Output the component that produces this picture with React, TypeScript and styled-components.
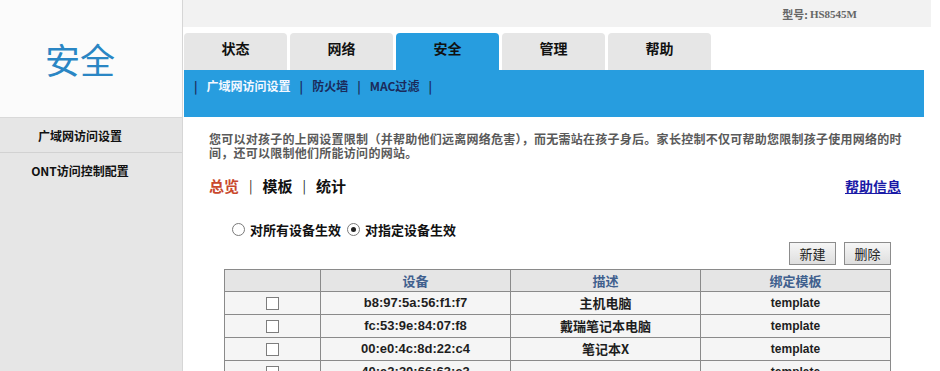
import React from "react";
import styled, { createGlobalStyle } from "styled-components";

const Global = createGlobalStyle`
  html, body { margin: 0; padding: 0; background: #fff; }
  body {
    font-family: "Liberation Sans", "Noto Sans CJK SC", sans-serif;
    height: 371px;
    overflow: hidden;
  }
`;

const CJK = `"Noto Sans CJK SC", "Liberation Sans", sans-serif`;

const Page = styled.div`
  display: flex;
  width: 940px;
  height: 371px;
  overflow: hidden;
`;

const Sidebar = styled.div`
  width: 182px;
  flex: none;
  background: #e6e6e6;
  border-right: 1px solid #d6d6d6;
  display: flex;
  flex-direction: column;
  & > * { flex-shrink: 0; }
`;

const Brand = styled.div`
  height: 117px;
  background: #fbfbfb;
  border-bottom: 1px solid #d9d9d9;
  display: flex;
  align-items: center;
  justify-content: center;
  padding-right: 22px;
  font-family: ${CJK};
  font-size: 35px;
  color: #2a86c4;
`;

const MenuItem = styled.div<{ $line?: boolean }>`
  height: 34px;
  display: flex;
  align-items: center;
  justify-content: center;
  padding-right: 22px;
  font-family: ${CJK};
  font-size: 12px;
  font-weight: bold;
  color: #111;
  border-bottom: ${(p) => (p.$line ? "1px solid #d2d2d2" : "none")};
`;

const Main = styled.div`
  width: 748px;
  display: flex;
  flex-direction: column;
  & > * { flex-shrink: 0; }
`;

const TopBar = styled.div`
  height: 27px;
  background: #f2f2f2;
  display: flex;
  align-items: center;
  justify-content: flex-end;
  padding-right: 74px;
  font-family: ${CJK};
  font-size: 11px;
  font-weight: bold;
  color: #666;
`;

const Model = styled.span`
  font-family: "Liberation Serif", serif;
  font-size: 11px;
  font-weight: bold;
  margin-left: 2px;
`;

const Tabs = styled.div`
  margin-top: 6px;
  display: flex;
  gap: 3px;
  padding-left: 1px;
  height: 37px;
`;

const Tab = styled.div<{ $active?: boolean }>`
  width: 103px;
  height: 37px;
  border-radius: 4px 4px 0 0;
  background: ${(p) => (p.$active ? "#279ddf" : "#e6e6e6")};
  display: flex;
  justify-content: center;
  padding-top: 6px;
  box-sizing: border-box;
  font-family: ${CJK};
  font-size: 14px;
  font-weight: bold;
  color: #111;
  line-height: 18px;
`;

const BlueBar = styled.div`
  margin-left: 1px;
  width: 740px;
  height: 47px;
  background: #279ddf;
  display: flex;
  align-items: flex-start;
  padding: 8px 0 0 10px;
  box-sizing: border-box;
  gap: 9px;
  font-family: ${CJK};
  font-size: 12px;
  font-weight: bold;
  line-height: 16px;
  color: #1b2b5c;
`;

const SubItem = styled.span<{ $active?: boolean }>`
  color: ${(p) => (p.$active ? "#f4f8ff" : "#1b2b5c")};
`;

const Sep = styled.span`
  color: #1b2b5c;
`;

const Content = styled.div`
  padding: 15px 0 0 26px;
  display: flex;
  flex-direction: column;
  & > * { flex-shrink: 0; }
`;

const Intro = styled.p`
  margin: 0;
  font-family: ${CJK};
  font-size: 12px;
  letter-spacing: 0.26px;
  line-height: 14px;
  font-weight: bold;
  color: #5a5a5a;
  white-space: nowrap;
`;

const NavRow = styled.div`
  margin-top: 17px;
  width: 692px;
  display: flex;
  align-items: center;
  font-family: ${CJK};
  font-size: 15px;
  font-weight: bold;
  line-height: 18px;
`;

const NavLink = styled.span<{ $active?: boolean }>`
  color: ${(p) => (p.$active ? "#c9482c" : "#111")};
`;

const NavSep = styled.span`
  color: #222;
  margin: 0 10px;
  font-size: 13px;
  font-weight: normal;
`;

const HelpLink = styled.a`
  margin-left: auto;
  color: #1a1aa6;
  text-decoration: underline;
  font-size: 14px;
`;

const RadioRow = styled.div`
  margin: 26px 0 0 20px;
  display: flex;
  align-items: center;
  font-family: ${CJK};
  font-size: 13px;
  font-weight: bold;
  color: #111;
  height: 16px;
`;

const Radio = styled.span<{ $checked?: boolean }>`
  width: 11px;
  height: 11px;
  border-radius: 50%;
  border: 1px solid #7a7a7a;
  background: #fff;
  display: inline-flex;
  align-items: center;
  justify-content: center;
  margin-right: 5px;
  margin-left: 3px;
  &::after {
    content: "";
    width: 5px;
    height: 5px;
    border-radius: 50%;
    background: ${(p) => (p.$checked ? "#222" : "transparent")};
  }
`;

const RadioLabel = styled.span`
  margin-right: 3px;
`;

const ButtonRow = styled.div`
  margin-top: 5px;
  width: 682px;
  display: flex;
  justify-content: flex-end;
  gap: 8px;
`;

const Button = styled.button`
  width: 47px;
  height: 23px;
  padding: 0;
  border: 1px solid #8c8c8c;
  background: linear-gradient(#f6f6f6, #dedede);
  font-family: ${CJK};
  font-size: 13px;
  color: #222;
  line-height: 20px;
`;

const Table = styled.table`
  margin: 4px 0 0 15px;
  border-collapse: collapse;
  width: 667px;
  table-layout: fixed;
`;

const Th = styled.th<{ $w: number }>`
  width: ${(p) => p.$w}px;
  height: 21px;
  padding: 0;
  background: #e5e5e5;
  border: 1px solid #8a8a8a;
  font-family: ${CJK};
  font-size: 13px;
  font-weight: bold;
  color: #40608e;
  line-height: 16px;
`;

const Td = styled.td<{ $kind?: "cjk" | "mac" | "plain" }>`
  height: 22px;
  padding: 0;
  background: #f5f5f5;
  border: 1px solid #8a8a8a;
  text-align: center;
  font-family: ${(p) => (p.$kind === "cjk" ? CJK : `"Liberation Sans", sans-serif`)};
  font-size: ${(p) => (p.$kind === "plain" ? "12px" : "13px")};
  font-weight: bold;
  color: #1e1e1e;
  line-height: 16px;
`;

const Check = styled.span`
  display: inline-block;
  width: 11px;
  height: 11px;
  border: 1px solid #7d7d7d;
  background: #fff;
  vertical-align: middle;
`;

const rows = [
  { mac: "b8:97:5a:56:f1:f7", desc: "主机电脑", tpl: "template" },
  { mac: "fc:53:9e:84:07:f8", desc: "戴瑞笔记本电脑", tpl: "template" },
  { mac: "00:e0:4c:8d:22:c4", desc: "笔记本X", tpl: "template" },
  { mac: "40:a2:30:66:63:c3", desc: "", tpl: "template" },
];

export default function App() {
  return (
    <>
      <Global />
      <Page>
        <Sidebar>
          <Brand>安全</Brand>
          <MenuItem $line>广域网访问设置</MenuItem>
          <MenuItem>ONT访问控制配置</MenuItem>
        </Sidebar>
        <Main>
          <TopBar>
            型号:<Model>HS8545M</Model>
          </TopBar>
          <Tabs>
            <Tab>状态</Tab>
            <Tab>网络</Tab>
            <Tab $active>安全</Tab>
            <Tab>管理</Tab>
            <Tab>帮助</Tab>
          </Tabs>
          <BlueBar>
            <Sep>|</Sep>
            <SubItem $active>广域网访问设置</SubItem>
            <Sep>|</Sep>
            <SubItem>防火墙</SubItem>
            <Sep>|</Sep>
            <SubItem>MAC过滤</SubItem>
            <Sep>|</Sep>
          </BlueBar>
          <Content>
            <Intro>
              您可以对孩子的上网设置限制（并帮助他们远离网络危害），而无需站在孩子身后。家长控制不仅可帮助您限制孩子使用网络的时
              <br />
              间，还可以限制他们所能访问的网站。
            </Intro>
            <NavRow>
              <NavLink $active>总览</NavLink>
              <NavSep>|</NavSep>
              <NavLink>模板</NavLink>
              <NavSep>|</NavSep>
              <NavLink>统计</NavLink>
              <HelpLink href="#">帮助信息</HelpLink>
            </NavRow>
            <RadioRow>
              <Radio />
              <RadioLabel>对所有设备生效</RadioLabel>
              <Radio $checked />
              <RadioLabel>对指定设备生效</RadioLabel>
            </RadioRow>
            <ButtonRow>
              <Button>新建</Button>
              <Button>删除</Button>
            </ButtonRow>
            <Table>
              <colgroup>
                <col style={{ width: 96 }} />
                <col style={{ width: 190 }} />
                <col style={{ width: 190 }} />
                <col style={{ width: 190 }} />
              </colgroup>
              <thead>
                <tr>
                  <Th $w={96}></Th>
                  <Th $w={190}>设备</Th>
                  <Th $w={190}>描述</Th>
                  <Th $w={190}>绑定模板</Th>
                </tr>
              </thead>
              <tbody>
                {rows.map((r) => (
                  <tr key={r.mac}>
                    <Td>
                      <Check />
                    </Td>
                    <Td $kind="mac">{r.mac}</Td>
                    <Td $kind="cjk">{r.desc}</Td>
                    <Td $kind="plain">{r.tpl}</Td>
                  </tr>
                ))}
              </tbody>
            </Table>
          </Content>
        </Main>
      </Page>
    </>
  );
}
